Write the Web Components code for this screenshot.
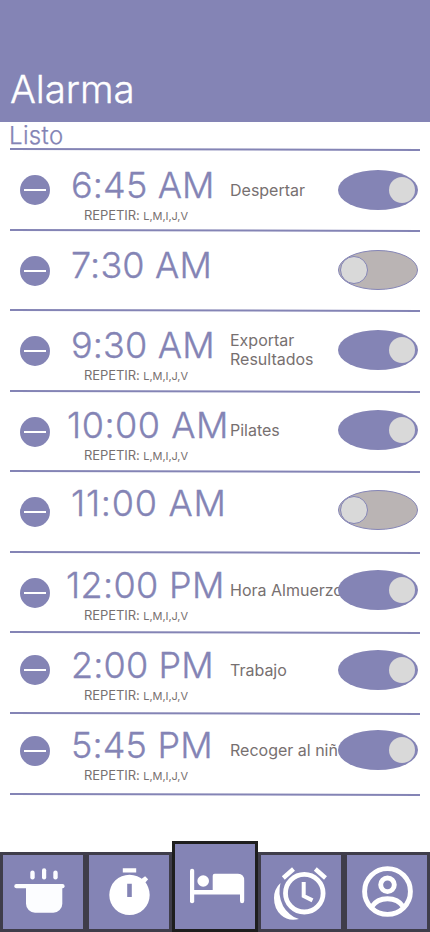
<!DOCTYPE html>
<html lang="es">
<head>
<meta charset="utf-8">
<title>Alarma</title>
<style>
html,body{margin:0;padding:0;background:#fff}
body{width:430px;height:932px;overflow:hidden;font-family:Inter,"Liberation Sans",sans-serif;font-weight:300;font-optical-sizing:none}
</style>
</head>
<body>
<alarm-app></alarm-app>
<script>
const define = (name, html, setup) => {
  const t = document.createElement('template');
  t.innerHTML = html;
  customElements.define(name, class extends HTMLElement {
    constructor() {
      super();
      this.attachShadow({ mode: 'open' }).append(t.content.cloneNode(true));
    }
    connectedCallback() { if (setup) setup(this, this.shadowRoot); }
  });
};

define('app-header', `
<style>
:host{display:flex;align-items:flex-end;height:122px;box-sizing:border-box;padding:0 10px 9px;background:#8484b5;color:#fff;font-size:38.5px;line-height:48px;letter-spacing:-.1px;-webkit-text-stroke:.35px #fff}
</style><span><slot></slot></span>`);

define('thin-rule', `
<style>
:host{display:block;width:410px;height:3px}
svg{display:block}
</style><svg width="410" height="3" viewBox="0 0 410 3"><path d="M0 1L410 2" stroke="#8484b5" stroke-width="2"/></svg>`);

define('remove-button', `
<style>
:host{display:block;width:30px;height:30px}
svg{display:block}
</style><svg width="30" height="30" viewBox="0 0 30 30"><circle cx="15" cy="15" r="15" fill="#8484b5"/><path d="M4 15h22" stroke="#fff" stroke-width="2"/></svg>`);

define('toggle-switch', `
<style>
:host{display:block;width:80px;height:40px}
svg{display:block}
.off{display:none}
:host([off]) .off{display:block}
:host([off]) .on{display:none}
</style>
<svg class="on" width="80" height="40" viewBox="0 0 80 40"><ellipse cx="40" cy="20" rx="40" ry="20" fill="#8484b5"/><circle cx="64" cy="20" r="13" fill="#d9d9d9"/></svg>
<svg class="off" width="80" height="40" viewBox="0 0 80 40"><ellipse cx="40" cy="20" rx="39.5" ry="19.5" fill="#bab4b4" stroke="#8484b5"/><circle cx="16" cy="20" r="13.5" fill="#d9d9d9" stroke="#8484b5"/></svg>`);

define('alarm-row', `
<style>
:host{display:grid;height:80px;grid-template-columns:57px 163px 108px 80px;grid-template-rows:79px 3px;padding-left:10px}
remove-button{margin:var(--btn,25px) 0 0 10px}
.when{display:flex;flex-direction:column;color:#8484b5;white-space:nowrap;padding-top:var(--ty,13px)}
.time{font-size:36px;line-height:44px;padding-left:var(--tx,4px);letter-spacing:var(--ls,.15px);-webkit-text-stroke:.35px #8484b5}
.rep{font-size:13px;line-height:16px;font-weight:400;letter-spacing:-.07px;color:#777070;padding-left:17px}
.rep small{font-size:11px}
.label{align-self:center;font-size:16px;line-height:19px;font-weight:400;letter-spacing:0;color:#777070;white-space:pre;padding-top:1px}
toggle-switch{margin-top:20px;z-index:1}
thin-rule{grid-column:1/-1;margin-top:var(--rule,0px)}
:host([off]) .rep{display:none}
</style>
<remove-button></remove-button>
<div class="when"><span class="time"><slot name="time"></slot></span><span class="rep">REPETIR: <small>L,M,I,J,V</small></span></div>
<div class="label"><slot></slot></div>
<toggle-switch></toggle-switch>
<thin-rule></thin-rule>`, (el, root) => {
  root.querySelector('toggle-switch').toggleAttribute('off', el.hasAttribute('off'));
});

define('nav-tile', `
<style>
:host{display:block;box-sizing:border-box;width:86px;height:80px;border:3px solid #3f3d4a;background:#8484b5}
:host([active]){height:91px;border-color:#1e1e1e}
</style><slot></slot>`);

define('nav-bar', `
<style>
:host{display:flex;align-items:flex-end;height:91px}
svg{display:block}
</style>
<nav-tile><svg width="80" height="74" viewBox="3 855 80 74" fill="#fcfdff"><rect x="30.3" y="870.5" width="4.4" height="9" rx="2.2"/><rect x="42" y="868.2" width="4.2" height="11.3" rx="2.1"/><rect x="53.3" y="870.5" width="4.4" height="9" rx="2.2"/><rect x="14.3" y="884" width="50.3" height="4.3" rx="2.1"/><path d="M26 886H62.3V903.7a9 9 0 0 1-9 9H35a9 9 0 0 1-9-9z"/></svg></nav-tile>
<nav-tile><svg width="80" height="74" viewBox="89 855 80 74" fill="#fff"><path fill-rule="evenodd" d="M129.5 874.7a20.2 20.2 0 1 1 0 40.4a20.2 20.2 0 1 1 0-40.4zM127.2 883.7v13.3h4.6v-13.3z"/><path d="M122.8 868.2h13.4v4.4h-13.4z"/><path d="M141 879.2l4.1-3 3 3-3.300 4z"/></svg></nav-tile>
<nav-tile active><svg width="80" height="85" viewBox="175 844 80 85" fill="#fff"><rect x="190" y="868.7" width="4.2" height="34.5" rx="2"/><circle cx="203.2" cy="881" r="5.8"/><path d="M192 890H212.7V875.7Q212.7 873.8 214.7 873.8H238Q244.2 873.8 244.2 880.5V901Q244.2 903.2 242.1 903.2Q240 903.2 240 901V894.5H192z"/></svg></nav-tile>
<nav-tile><svg width="80" height="74" viewBox="261 855 80 74"><g fill="none" stroke="#fff" stroke-width="4.4"><circle cx="304.3" cy="893.2" r="18.8" stroke-width="4.8"/><path d="M303.7 882v14l8.8 4.4" stroke-width="4"/><path d="M283.300 878l10.200-9M315.300 869l10.200 9"/></g><path d="M280.500 883Q279.200 888 279.500 894Q281 907 290 914.300Q294 918 299 919Q288 921.500 281 915Q274 908.500 274 898Q274 889 280.500 883z" fill="#fff"/></svg></nav-tile>
<nav-tile><svg width="80" height="74" viewBox="347 855 80 74"><g fill="none" stroke="#fff" stroke-width="4.9"><circle cx="387.5" cy="891.5" r="22.9"/><circle cx="387.5" cy="884.8" r="6.8"/><path d="M371.5 907Q377 898.8 387.5 898.8Q398 898.8 403.5 907"/></g></svg></nav-tile>`);

define('alarm-app', `
<style>
:host{display:flex;flex-direction:column;width:430px;height:932px;background:#fff}
.done{box-sizing:border-box;height:26px;padding-left:9px;font-size:24px;line-height:28px;letter-spacing:.35px;color:#8484b5;-webkit-text-stroke:.25px #8484b5}
.done+thin-rule{margin-left:10px;margin-bottom:-1px}
nav-bar{margin-top:auto}
</style>
<app-header>Alarma</app-header>
<div class="done">Listo</div>
<thin-rule></thin-rule>
<alarm-row><span slot="time">6:45 AM</span>Despertar</alarm-row>
<alarm-row off style="--btn:26px"><span slot="time">7:30 AM</span></alarm-row>
<alarm-row style="--btn:26px;--rule:1px"><span slot="time">9:30 AM</span>Exportar
Resultados</alarm-row>
<alarm-row style="--btn:27px;--rule:1px;--tx:0px;--ls:.5px"><span slot="time">10:00 AM</span>Pilates</alarm-row>
<alarm-row off style="--btn:27px;--rule:2px;--ty:11px;--ls:.75px"><span slot="time">11:00 AM</span></alarm-row>
<alarm-row style="--btn:28px;--rule:2px;--tx:0px;--ls:.35px"><span slot="time" style="margin-left:-1px">12:00 PM</span>Hora Almuerzo</alarm-row>
<alarm-row style="--btn:25px;--rule:3px"><span slot="time">2:00 PM</span>Trabajo</alarm-row>
<alarm-row style="--btn:26px;--rule:4px"><span slot="time">5:45 PM</span>Recoger al niño</alarm-row>
<nav-bar></nav-bar>`);
</script>
</body>
</html>
